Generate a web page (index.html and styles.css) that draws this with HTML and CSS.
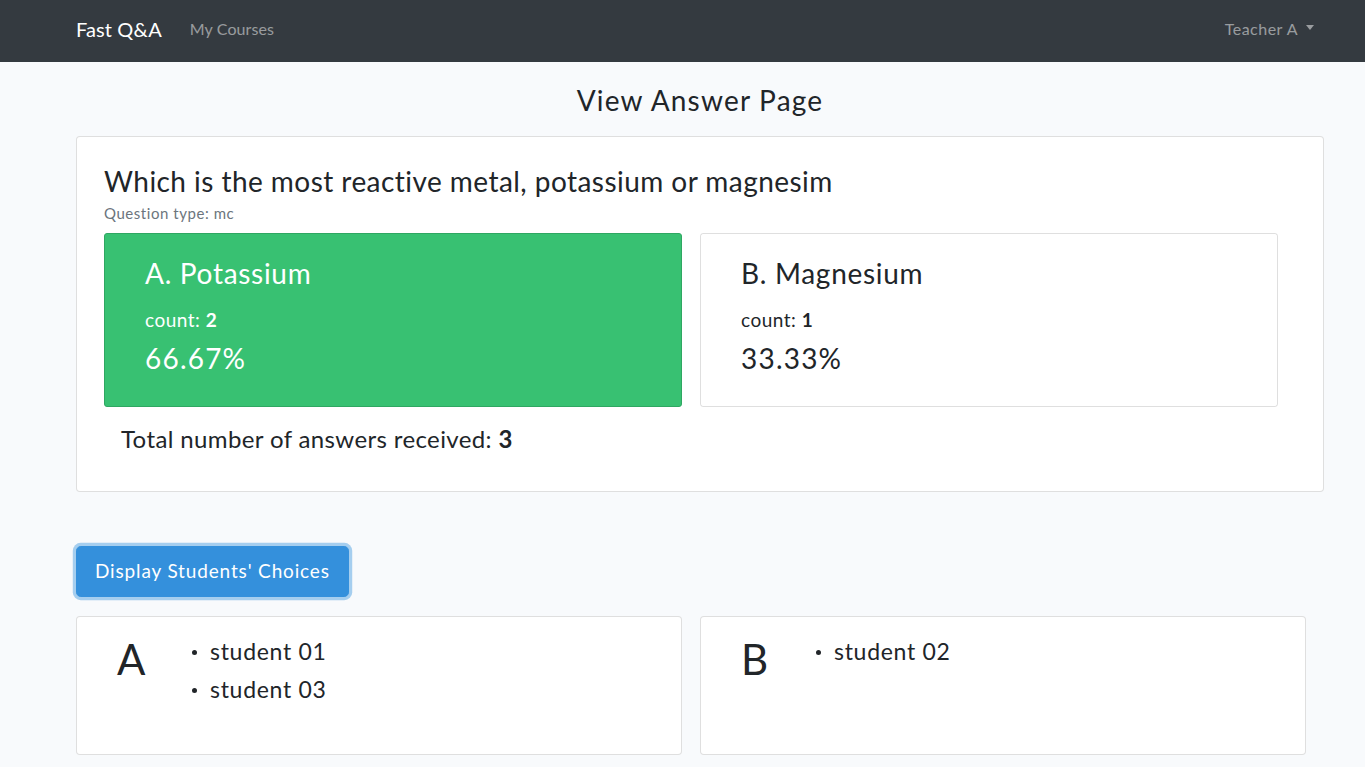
FILE: index.html
```html
<!DOCTYPE html>
<html lang="en">
<head>
<meta charset="utf-8">
<title>View Answer Page - Fast Q&amp;A</title>
<link rel="stylesheet" href="styles.css">
</head>
<body>
<nav class="navbar">
  <div class="nav-inner">
    <div class="nav-left">
      <a class="brand" href="#">Fast Q&amp;A</a>
      <a class="nav-link" href="#">My Courses</a>
    </div>
    <a class="nav-link dropdown" href="#">Teacher A <span class="caret"></span></a>
  </div>
</nav>

<main class="container">
  <h3 class="page-title">View Answer Page</h3>

  <section class="card question-card">
    <h3 class="question">Which is the most reactive metal, potassium or magnesim</h3>
    <p class="qtype">Question type: mc</p>
    <div class="options">
      <div class="option correct">
        <h3 class="opt-title">A. Potassium</h3>
        <p class="opt-count">count: <b>2</b></p>
        <p class="opt-pct">66.67%</p>
      </div>
      <div class="option">
        <h3 class="opt-title">B. Magnesium</h3>
        <p class="opt-count">count: <b>1</b></p>
        <p class="opt-pct">33.33%</p>
      </div>
    </div>
    <p class="total">Total number of answers received: <b>3</b></p>
  </section>

  <button class="btn-primary" type="button">Display Students' Choices</button>

  <div class="choices">
    <div class="card choice">
      <div class="letter">A</div>
      <ul class="students">
        <li>student 01</li>
        <li>student 03</li>
      </ul>
    </div>
    <div class="card choice">
      <div class="letter">B</div>
      <ul class="students">
        <li>student 02</li>
      </ul>
    </div>
  </div>
</main>
</body>
</html>
```

FILE: styles.css
```css
* { box-sizing: border-box; }

body {
  margin: 0;
  background: #f8fafc;
  color: #212529;
  font-family: "Lato", "Noto Sans", sans-serif;
  font-size: 14.4px;
  line-height: 1.5;
}

.navbar {
  height: 62px;
  background: #343a40;
}

.nav-inner {
  height: 100%;
  margin-left: 76px;
  width: 1246px;
  padding-bottom: 5px;
  display: flex;
  align-items: center;
  justify-content: space-between;
}

.nav-left {
  display: flex;
  align-items: center;
  gap: 20px;
}

.brand {
  color: #fff;
  font-size: 20px;
  text-decoration: none;
  line-height: 1.5;
  letter-spacing: 0.1px;
}

.nav-link {
  color: rgba(255, 255, 255, 0.5);
  text-decoration: none;
  font-size: 16px;
  padding: 8px 0 8px 8px;
  letter-spacing: 0.1px;
}

.nav-link.dropdown {
  padding-right: 8px;
  display: flex;
  align-items: center;
  letter-spacing: 0.5px;
}

.caret {
  display: inline-block;
  margin-left: 8px;
  border-top: 5px solid;
  border-left: 4.5px solid transparent;
  border-right: 4.5px solid transparent;
  margin-top: -3px;
}

.container {
  margin-left: 76px;
  width: 1248px;
  padding-top: 22px;
}

.page-title {
  margin: 0 0 20px;
  text-align: center;
  font-weight: 400;
  font-size: 28px;
  line-height: 32px;
  letter-spacing: 1.2px;
}

.card {
  background: #fff;
  border: 1px solid rgba(0, 0, 0, 0.125);
  border-radius: 4px;
}

.question-card {
  padding: 28px 27px 37px;
}

.question {
  margin: 0;
  font-weight: 400;
  font-size: 28px;
  line-height: 32px;
  letter-spacing: 0.45px;
}

.qtype {
  margin: 6px 0 9px;
  color: #6c757d;
  font-size: 15px;
  line-height: 21px;
  letter-spacing: 0.55px;
}

.options {
  display: grid;
  grid-template-columns: 578px 578px;
  gap: 18px;
}

.option {
  height: 174px;
  border: 1px solid rgba(0, 0, 0, 0.125);
  border-radius: 3px;
  padding: 23px 40px;
}

.option.correct {
  background: #38c172;
  border-color: #2fa762;
  color: #fff;
}

.opt-title {
  margin: 0;
  font-weight: 400;
  font-size: 28px;
  line-height: 32px;
  letter-spacing: 0.7px;
}

.opt-count {
  margin: 19px 0 0;
  font-size: 19px;
  line-height: 24px;
  letter-spacing: 0.5px;
}

.opt-pct {
  margin: 10px 0 0;
  font-size: 28px;
  line-height: 32px;
  letter-spacing: 1.2px;
}

.total {
  margin: 17px 0 0 17px;
  font-size: 24px;
  line-height: 30px;
  letter-spacing: 0.38px;
}

.btn-primary {
  display: block;
  margin: 54px 0 0;
  height: 51px;
  padding: 0 18px 3px;
  background: #3490dc;
  color: #fff;
  border: 1px solid #3490dc;
  border-radius: 4.8px;
  font-family: inherit;
  font-size: 19px;
  letter-spacing: 0.85px;
  box-shadow: 0 0 0 3.2px rgba(82, 161, 225, 0.5);
  cursor: pointer;
}

.choices {
  display: grid;
  grid-template-columns: 606px 606px;
  gap: 18px;
  margin-top: 19px;
}

.choice {
  height: 139px;
  display: flex;
  align-items: flex-start;
  padding: 17px 0 0 40px;
}

.letter {
  width: 75px;
  font-size: 42px;
  line-height: 50px;
}

.students {
  margin: -2px 0 0;
  padding: 0;
  list-style: none;
  font-size: 23px;
  line-height: 38px;
  letter-spacing: 0.7px;
}

.students li {
  display: flex;
  align-items: center;
}

.students li::before {
  content: "";
  width: 5px;
  height: 5px;
  border-radius: 50%;
  background: currentColor;
  margin: 3px 13px 0 0;
}
```
